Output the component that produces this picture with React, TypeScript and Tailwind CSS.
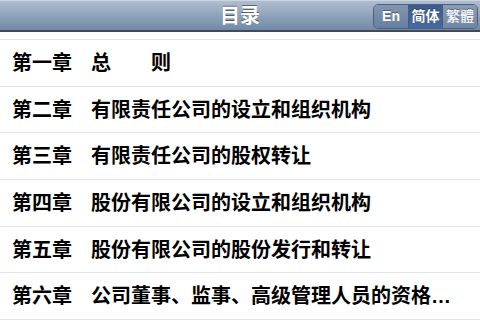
const chapters = [
  { no: '第一章', title: '总\u3000\u3000则' },
  { no: '第二章', title: '有限责任公司的设立和组织机构' },
  { no: '第三章', title: '有限责任公司的股权转让' },
  { no: '第四章', title: '股份有限公司的设立和组织机构' },
  { no: '第五章', title: '股份有限公司的股份发行和转让' },
  { no: '第六章', title: '公司董事、监事、高级管理人员的资格和义务' },
];

const font = { fontFamily: '"Liberation Sans", "Noto Sans CJK SC", sans-serif' };

export default function App() {
  return (
    <div className="w-[480px] h-[320px] overflow-hidden bg-white flex flex-col" style={font}>
      {/* nav bar */}
      <div className="relative h-[32px] shrink-0 bg-gradient-to-b from-[#b0bdcf] to-[#7189a8] border-t border-[#cbd4e0] border-b-2 border-b-[#3f4b5b] flex items-center justify-center">
        <span className="text-white text-[20px] font-bold [text-shadow:0_-1px_0_rgba(0,0,0,0.45)]">目录</span>
        <div className="absolute right-[2px] top-[3px] h-[25px] flex rounded-[5px] border border-[#4f607a] overflow-hidden text-[14px] font-bold text-white [text-shadow:0_-1px_0_rgba(0,0,0,0.35)]">
          <div className="w-[34px] flex items-center justify-center bg-gradient-to-b from-[#8396b1] to-[#677f9f]">En</div>
          <div className="w-[35px] flex items-center justify-center bg-gradient-to-b from-[#3a5d8f] to-[#4669a0] border-x border-[#4a5c78]">简体</div>
          <div className="w-[34px] flex items-center justify-center bg-gradient-to-b from-[#8b9cb4] to-[#7186a3] text-[#eef2f7]">繁體</div>
        </div>
      </div>

      {/* list */}
      <div className="flex-1 flex flex-col pt-[7px]">
        <div className="flex-1 flex flex-col border-t border-[#e3e3e3]">
          {chapters.map((c) => (
            <div key={c.no} className="flex-1 flex items-center pl-[12px] pr-[28px] border-b border-[#e3e3e3] text-[20px] font-bold text-black min-w-0">
              <span className="shrink-0 w-[79px]">{c.no}</span>
              <span className="truncate min-w-0">{c.title}</span>
            </div>
          ))}
        </div>
      </div>
    </div>
  );
}
